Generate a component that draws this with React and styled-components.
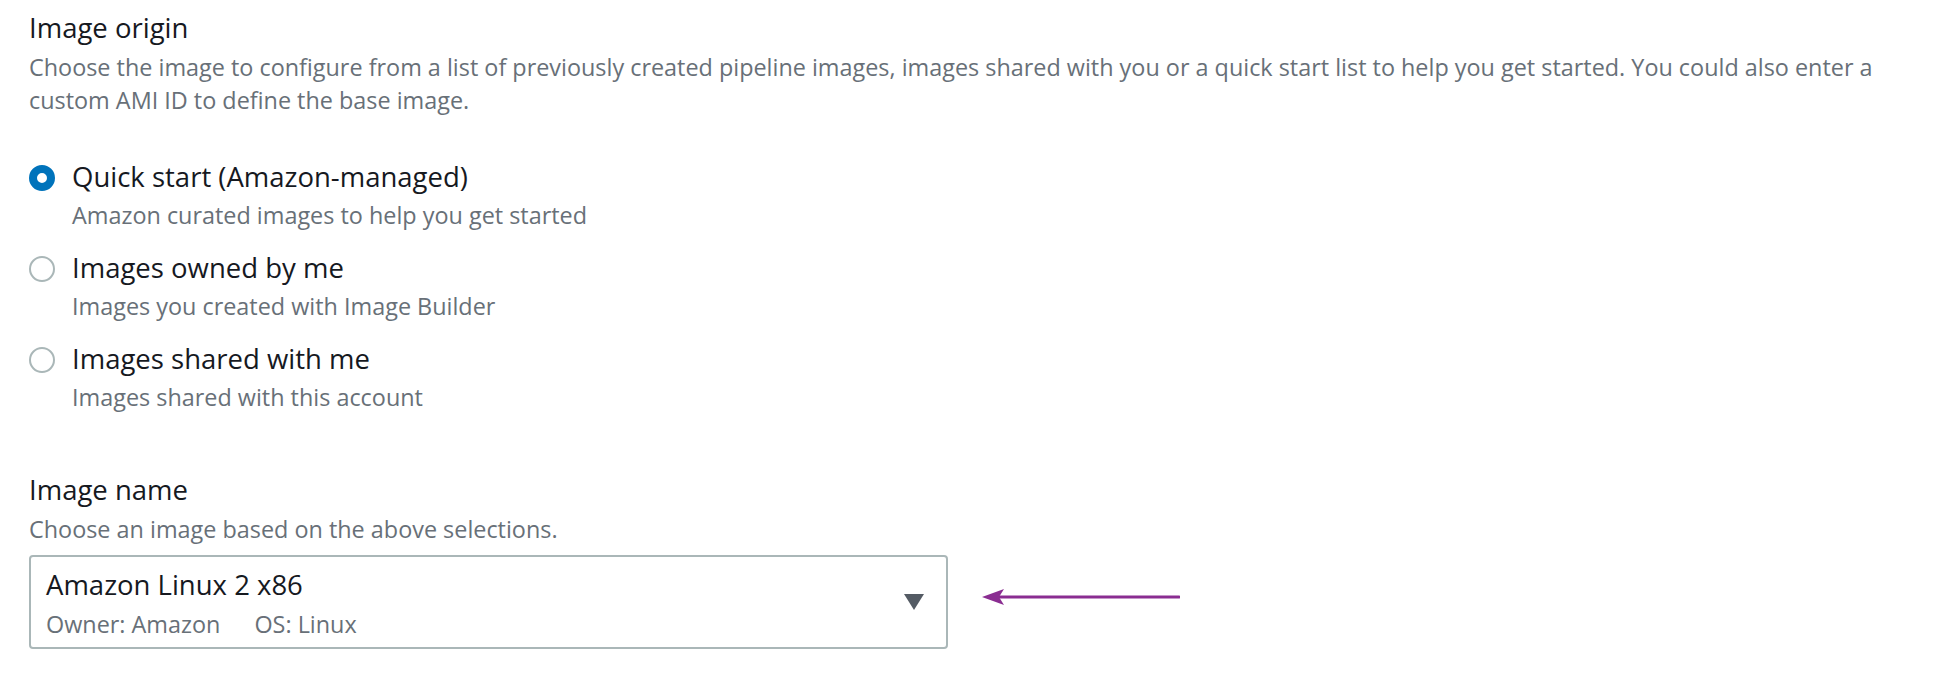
import React from "react";
import styled, { createGlobalStyle } from "styled-components";

const GlobalStyle = createGlobalStyle`
  html, body {
    margin: 0;
    padding: 0;
    background: #fff;
  }
  body {
    font-family: "Open Sans", "Noto Sans", Arial, sans-serif;
    color: #16191f;
  }
`;

const Page = styled.div`
  padding: 10px 0 0 29px;
  width: 1900px;
`;

const Field = styled.section`
  display: flex;
  flex-direction: column;
  margin-bottom: ${(p) => p.$gap || 0}px;
`;

const Label = styled.div`
  font-size: 27.5px;
  line-height: 36px;
  color: #16191f;
`;

const Description = styled.div`
  font-size: 23.4px;
  line-height: 32.5px;
  color: #687078;
  margin-top: ${(p) => p.$top || 4}px;
`;

const RadioGroup = styled.div`
  display: flex;
  flex-direction: column;
  margin-top: 43px;
`;

const RadioRow = styled.label`
  display: grid;
  grid-template-columns: 26px 1fr;
  column-gap: 17px;
  padding-bottom: 19px;
  cursor: pointer;
`;

const RadioCircle = styled.span`
  box-sizing: border-box;
  width: 26px;
  height: 26px;
  margin-top: 6px;
  border-radius: 50%;
  background: #fff;
  border: ${(p) => (p.$checked ? "8px solid #0073bb" : "2px solid #aab7b8")};
`;

const RadioText = styled.div`
  display: flex;
  flex-direction: column;
`;

const RadioTitle = styled.span`
  font-size: 27.5px;
  line-height: 36px;
  color: #16191f;
`;

const RadioSub = styled.span`
  font-size: 23.4px;
  line-height: 32px;
  color: #687078;
  margin-top: 4px;
`;

const SelectRow = styled.div`
  display: flex;
  align-items: center;
  gap: 34px;
  margin-top: 9px;
`;

const SelectBox = styled.div`
  box-sizing: border-box;
  width: 919px;
  height: 94px;
  border: 2px solid #aab7b8;
  border-radius: 4px;
  padding: 10px 22px 7px 15px;
  display: flex;
  align-items: center;
  justify-content: space-between;
`;

const SelectValue = styled.div`
  display: flex;
  flex-direction: column;
  align-self: flex-start;
`;

const SelectMain = styled.span`
  font-size: 27.5px;
  line-height: 36px;
  color: #16191f;
`;

const SelectMeta = styled.div`
  display: flex;
  gap: 34px;
  margin-top: 5px;
  font-size: 23.4px;
  line-height: 32px;
  color: #687078;
`;

const Caret = styled.span`
  width: 0;
  height: 0;
  border-left: 10px solid transparent;
  border-right: 10px solid transparent;
  border-top: 16px solid #545b64;
  margin-top: -3px;
`;

const PointerWrap = styled.div`
  display: flex;
  margin-top: -9px;
`;

const Pointer = () => (
  <PointerWrap>
    <svg width="198" height="20" viewBox="0 0 198 20">
      <line x1="14" y1="10" x2="197" y2="10" stroke="#8a2d91" strokeWidth="3" strokeLinecap="round" />
      <polygon points="0,10 22,2 17,10 22,18" fill="#8a2d91" />
    </svg>
  </PointerWrap>
);

const options = [
  {
    title: "Quick start (Amazon-managed)",
    sub: "Amazon curated images to help you get started",
    checked: true,
  },
  {
    title: "Images owned by me",
    sub: "Images you created with Image Builder",
  },
  {
    title: "Images shared with me",
    sub: "Images shared with this account",
  },
];

export default function App() {
  return (
    <>
      <GlobalStyle />
      <Page>
        <Field $gap={40}>
          <Label>Image origin</Label>
          <Description $top={5}>
            Choose the image to configure from a list of previously created pipeline images, images shared with you or a quick start list to help you get started. You could also enter a
            <br />
            custom AMI ID to define the base image.
          </Description>
          <RadioGroup>
            {options.map((o) => (
              <RadioRow key={o.title}>
                <RadioCircle $checked={o.checked} />
                <RadioText>
                  <RadioTitle>{o.title}</RadioTitle>
                  <RadioSub>{o.sub}</RadioSub>
                </RadioText>
              </RadioRow>
            ))}
          </RadioGroup>
        </Field>
        <Field>
          <Label>Image name</Label>
          <Description $top={5}>Choose an image based on the above selections.</Description>
          <SelectRow>
            <SelectBox>
              <SelectValue>
                <SelectMain>Amazon Linux 2 x86</SelectMain>
                <SelectMeta>
                  <span>Owner: Amazon</span>
                  <span>OS: Linux</span>
                </SelectMeta>
              </SelectValue>
              <Caret />
            </SelectBox>
            <Pointer />
          </SelectRow>
        </Field>
      </Page>
    </>
  );
}
